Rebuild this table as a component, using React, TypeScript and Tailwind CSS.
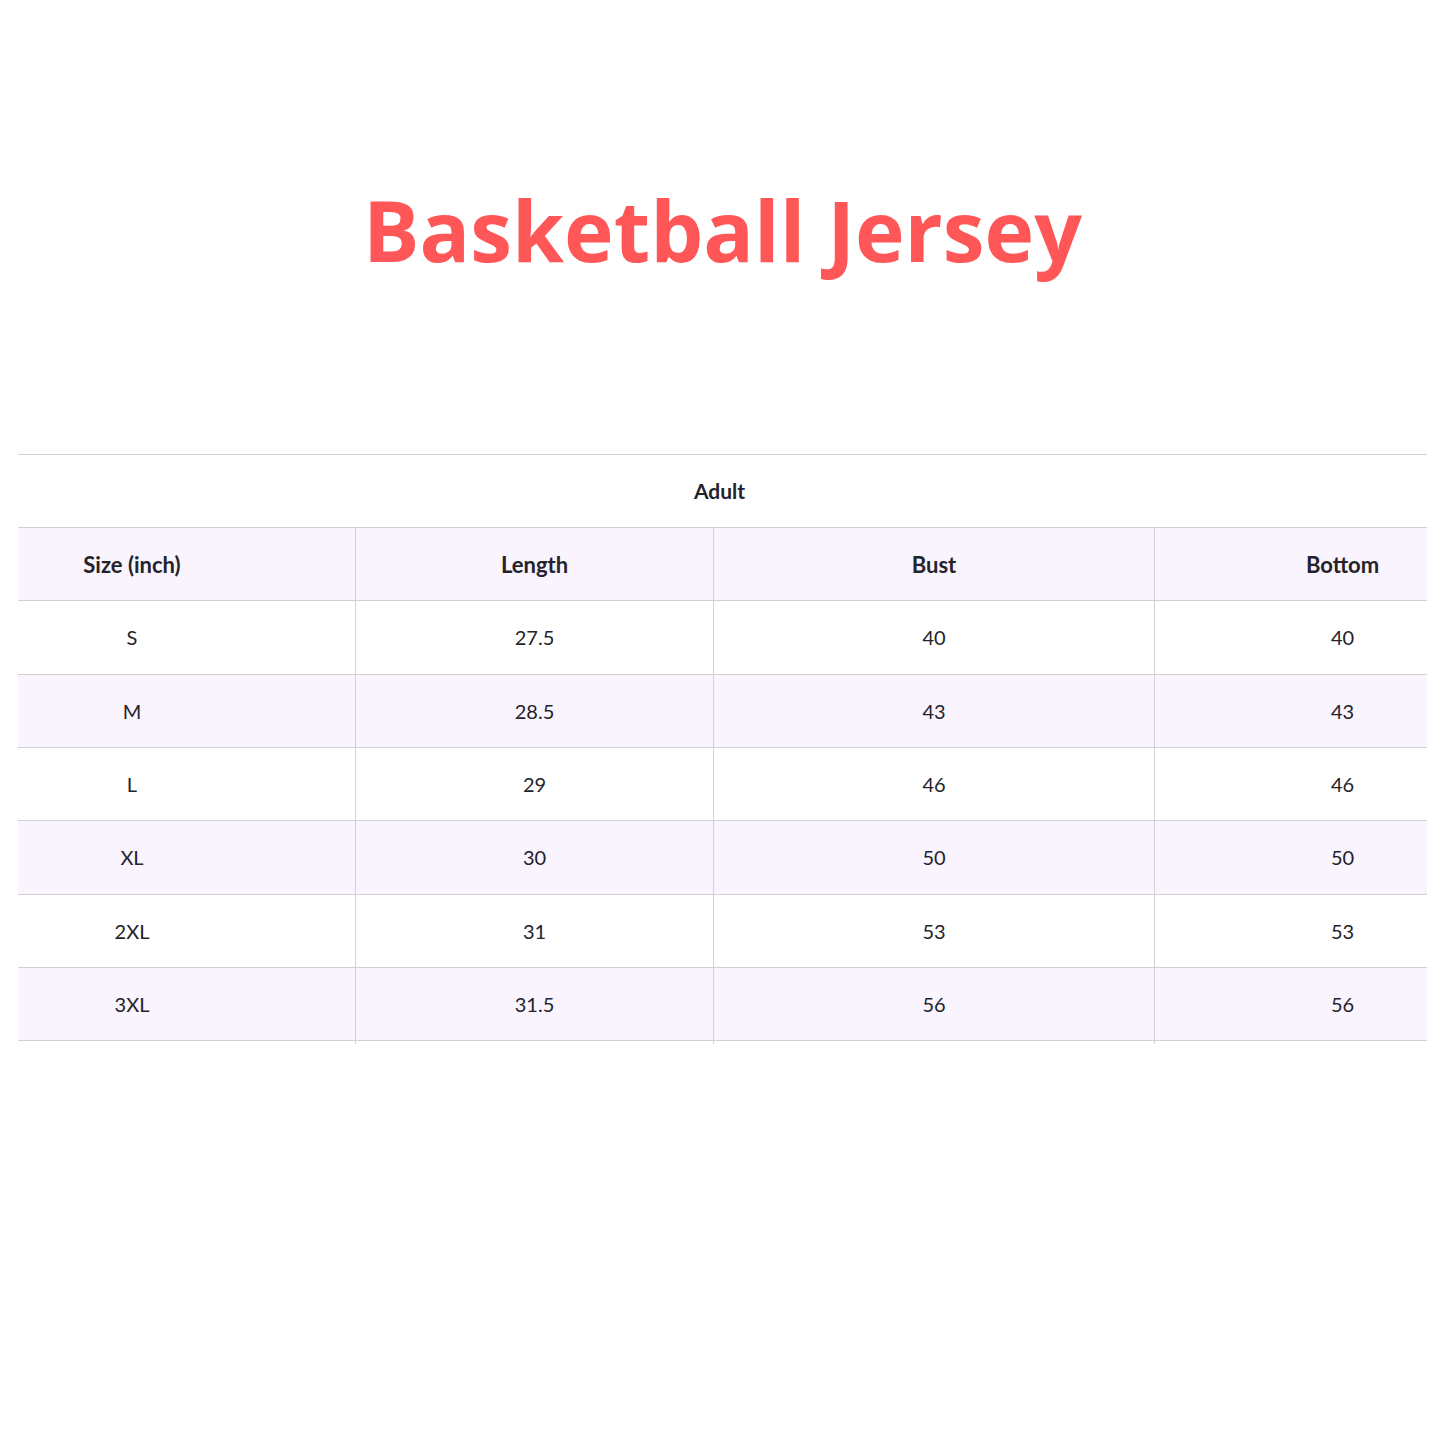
import React from "react";

const rows = [
  ["S", "27.5", "40", "40"],
  ["M", "28.5", "43", "43"],
  ["L", "29", "46", "46"],
  ["XL", "30", "50", "50"],
  ["2XL", "31", "53", "53"],
  ["3XL", "31.5", "56", "56"],
];

const colW = ["w-[446px]", "w-[358px]", "w-[441px]", "w-[376px]"];

function Row({ cells, striped, bold }: { cells: string[]; striped: boolean; bold?: boolean }) {
  return (
    <div className={`flex h-[73.33px] border-t border-[#d2d2d4] ${striped ? "bg-[#f9f4fe]" : "bg-white"}`}>
      {cells.map((c, i) => (
        <div
          key={i}
          className={`${colW[i]} flex shrink-0 items-center justify-center ${i > 0 ? "border-l border-[#d2d2d4]" : ""} ${bold ? "font-bold text-[22px]" : "font-normal text-[20px]"}`}
        >
          {c}
        </div>
      ))}
    </div>
  );
}

export default function App() {
  return (
    <div className="w-[1445px] h-[1445px] bg-white overflow-hidden">
      <div
        className="pt-[188px] text-center leading-none text-[84px] font-bold text-[#ff5757]"
        style={{ fontFamily: '"Open Sans", sans-serif' }}
      >
        Basketball Jersey
      </div>
      <div
        className="mt-[182px] mx-[18px] overflow-hidden text-[#24232b]"
        style={{ fontFamily: 'Lato, "Noto Sans", sans-serif' }}
      >
        <div className="ml-[-109px] w-[1621px]">
          <div className="flex h-[73px] items-center justify-center border-t border-[#d2d2d4] font-bold text-[21px]">
            Adult
          </div>
          <Row cells={["Size (inch)", "Length", "Bust", "Bottom"]} striped bold />
          {rows.map((r, i) => (
            <Row key={i} cells={r} striped={i % 2 === 1} />
          ))}
          <div className="flex h-[4px] border-t border-[#d2d2d4]">
            {colW.map((w, i) => (
              <div key={i} className={`${w} shrink-0 ${i > 0 ? "border-l border-[#d2d2d4]" : ""}`} />
            ))}
          </div>
        </div>
      </div>
    </div>
  );
}
